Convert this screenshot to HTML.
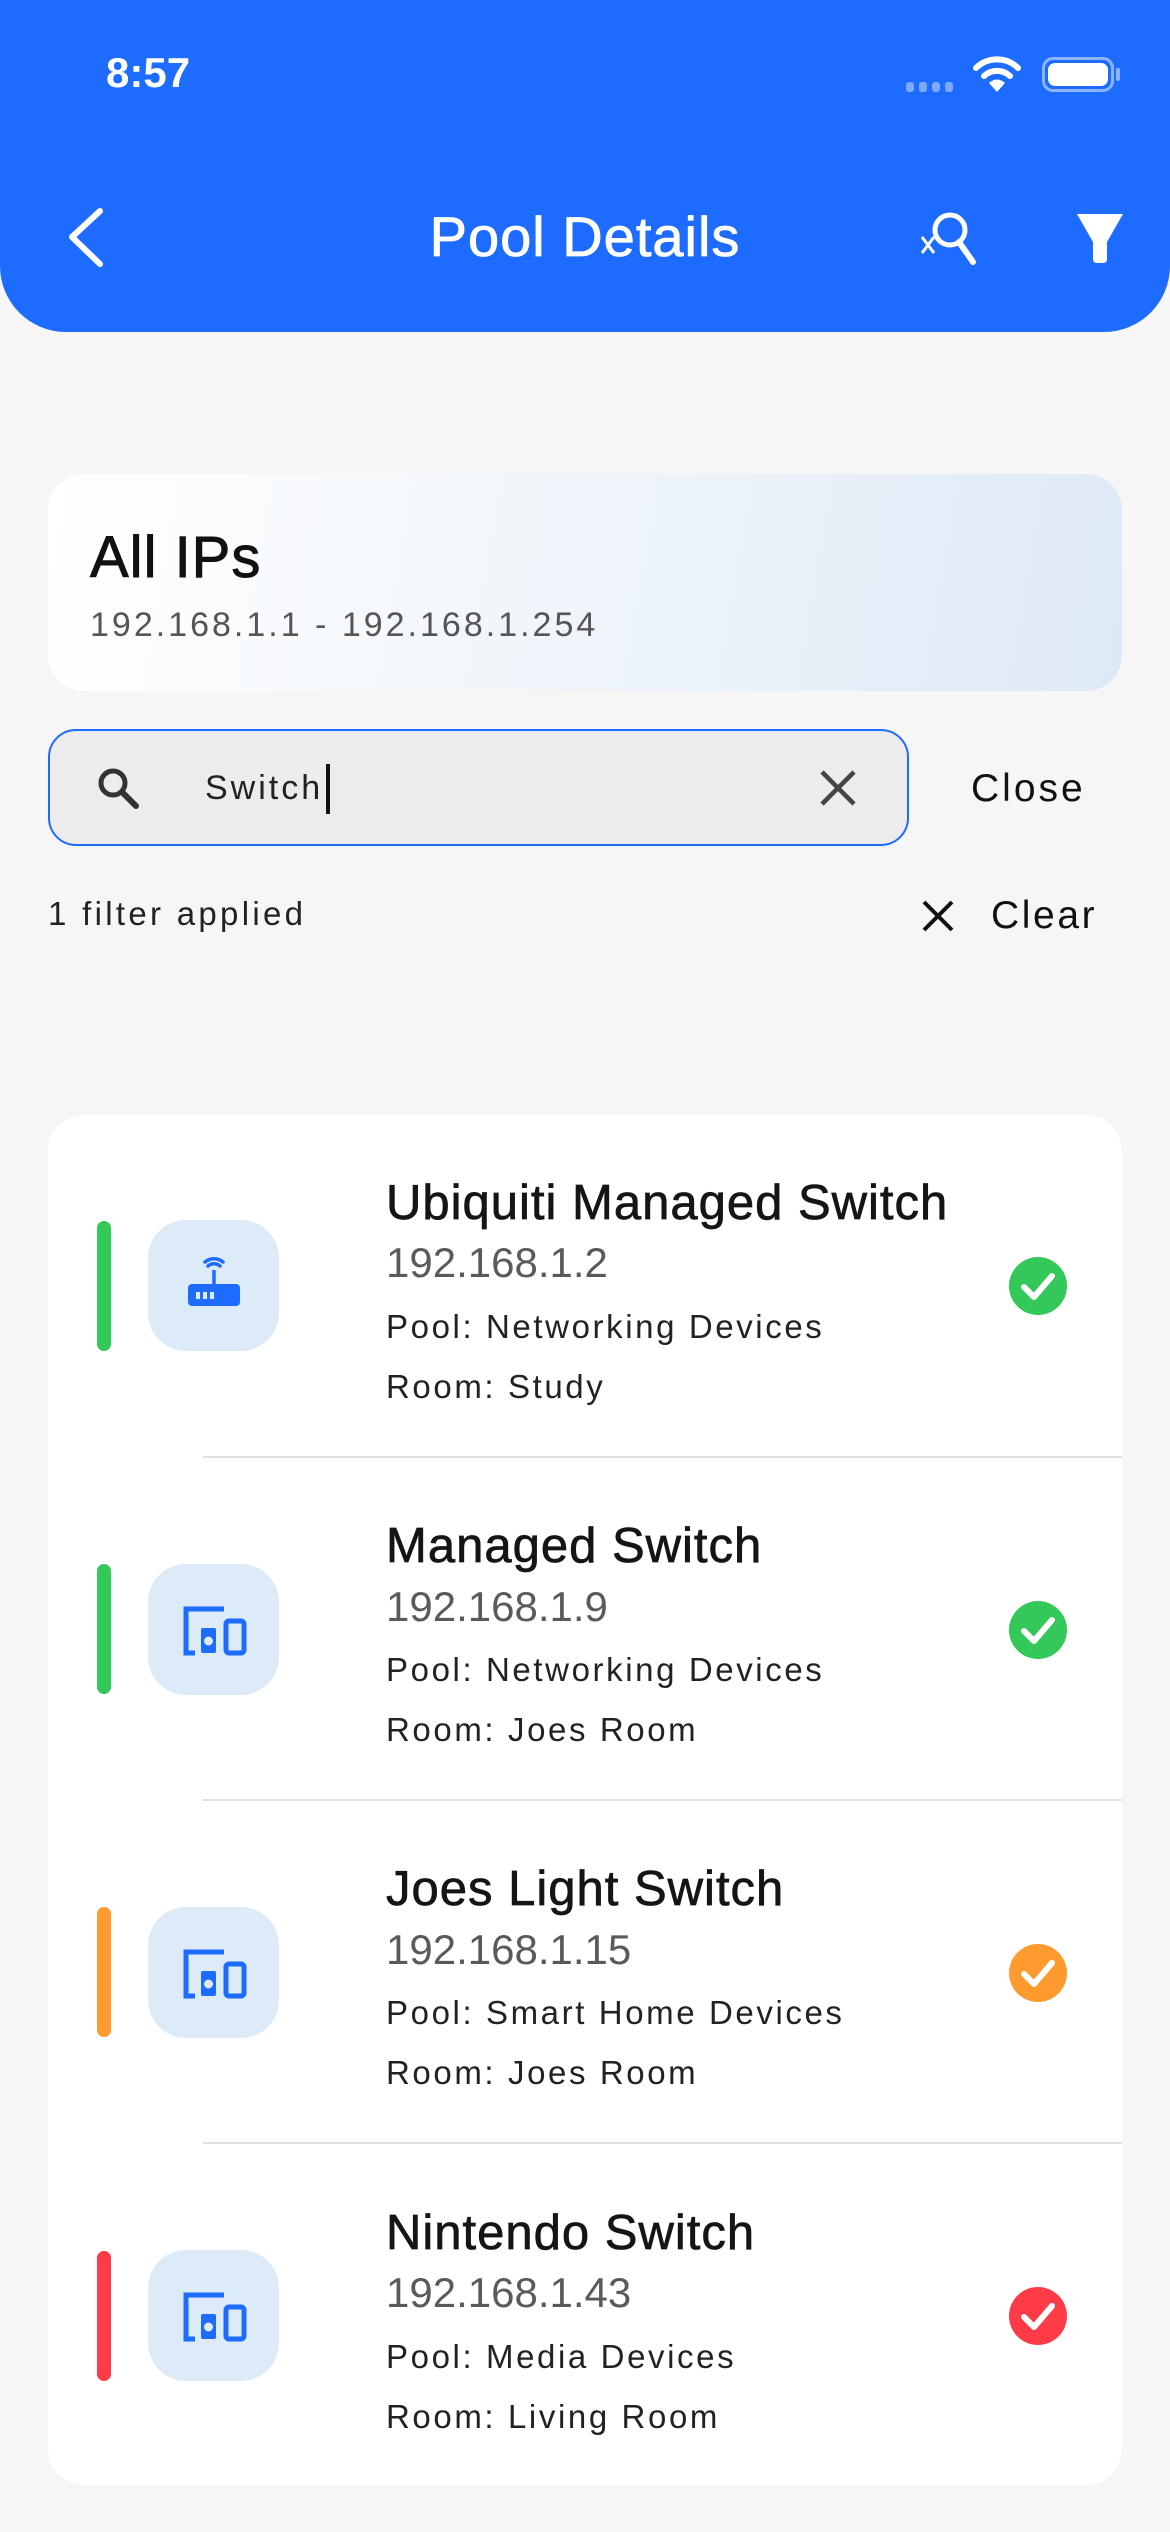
<!DOCTYPE html>
<html><head><meta charset="utf-8"><style>
*{margin:0;padding:0;box-sizing:border-box}
body{width:1170px;height:2532px;background:#f6f6f6;font-family:"Liberation Sans",sans-serif;position:relative;overflow:hidden;color:#111}
.abs{position:absolute}
.hdr{left:0;top:0;width:1170px;height:332px;background:#1e6bff;border-radius:0 0 66px 66px}
.t{white-space:nowrap;line-height:1}
.card{left:48px;top:474px;width:1074px;height:217px;border-radius:36px;background:linear-gradient(100deg,#ffffff 0%,#f4f8fc 35%,#dde9f6 100%)}
.sb{left:48px;top:729px;width:861px;height:117px;border-radius:28px;background:#ececec;border:2.5px solid #1e6bff}
.list{left:48px;top:1115px;width:1074px;height:1370px;border-radius:36px;background:#fff}
.bar{width:14px;height:130px;border-radius:7px}
.ib{width:131px;height:131px;border-radius:38px;background:#dcebf7}
.title{font-size:49px;color:#151515;letter-spacing:1px;-webkit-text-stroke:0.7px #151515}
.ip{font-size:42px;color:#5a5a5a}
.sm{font-size:33px;color:#222;letter-spacing:2.6px}
.div{height:2px;background:#e0e0e0;left:203px;width:919px}
</style></head><body>
<div class="abs hdr"></div>
<div class="abs t" style="left:106px;top:52px;font-size:42px;color:#fff;font-weight:bold">8:57</div>
<div class="abs" style="left:906px;top:82px;width:52px;height:10px">
<span class="abs" style="left:0;top:0;width:8px;height:10px;border-radius:3px;background:#7fa9ff"></span>
<span class="abs" style="left:13px;top:0;width:8px;height:10px;border-radius:3px;background:#7fa9ff"></span>
<span class="abs" style="left:26px;top:0;width:8px;height:10px;border-radius:3px;background:#7fa9ff"></span>
<span class="abs" style="left:39px;top:0;width:8px;height:10px;border-radius:3px;background:#7fa9ff"></span>
</div>
<svg class="abs" style="left:972px;top:54px" width="50" height="40" viewBox="0 0 50 40"><path d="M4 14 A30 30 0 0 1 46 14" stroke="#fff" stroke-width="6" fill="none" stroke-linecap="round"/><path d="M12 22 A19 19 0 0 1 38 22" stroke="#fff" stroke-width="6" fill="none" stroke-linecap="round"/><path d="M25 38 L17 29 A11 11 0 0 1 33 29 Z" fill="#fff"/></svg>
<div class="abs" style="left:1042px;top:57px;width:72px;height:35px;border:3px solid #8fb4ff;border-radius:11px"></div>
<div class="abs" style="left:1048px;top:63px;width:60px;height:23px;background:#fff;border-radius:7px"></div>
<div class="abs" style="left:1116px;top:68px;width:4px;height:13px;background:#8fb4ff;border-radius:2px"></div>
<svg class="abs" style="left:60px;top:205px" width="50" height="65" viewBox="0 0 50 65"><path d="M40 6 L12 32 L40 59" stroke="#fff" stroke-width="6" fill="none" stroke-linecap="round" stroke-linejoin="round"/></svg>
<div class="abs t" style="left:0;width:1170px;text-align:center;top:209px;font-size:56px;color:#fff;letter-spacing:1px;-webkit-text-stroke:0.8px #fff">Pool Details</div>
<svg class="abs" style="left:915px;top:205px" width="70" height="70" viewBox="0 0 70 70"><circle cx="35" cy="25" r="15" stroke="#fff" stroke-width="5" fill="none"/><path d="M44 37 L58 57" stroke="#fff" stroke-width="6" stroke-linecap="round"/><path d="M7 32 L19 48 M19 32 L7 48" stroke="#fff" stroke-width="3"/></svg>
<svg class="abs" style="left:1075px;top:212px" width="50" height="52" viewBox="0 0 50 52"><path d="M2 2 H48 L32 30 V47 Q32 51 28 51 H22 Q18 51 18 47 V30 Z" fill="#fff"/></svg>

<div class="abs card"></div>
<div class="abs t" style="left:90px;top:529px;font-size:58px;color:#111;letter-spacing:1px;-webkit-text-stroke:0.9px #111">All IPs</div>
<div class="abs t" style="left:90px;top:608px;font-size:34px;color:#555;letter-spacing:3px">192.168.1.1 - 192.168.1.254</div>

<div class="abs sb"></div>
<svg class="abs" style="left:94px;top:764px" width="48" height="48" viewBox="0 0 48 48"><circle cx="19" cy="19" r="12" stroke="#333" stroke-width="5" fill="none"/><path d="M28 28 L42 42" stroke="#333" stroke-width="6" stroke-linecap="round"/></svg>
<div class="abs t" style="left:205px;top:771px;font-size:34px;color:#222;letter-spacing:3px">Switch</div>
<div class="abs" style="left:326px;top:764px;width:4px;height:50px;background:#111"></div>
<svg class="abs" style="left:818px;top:768px" width="40" height="40" viewBox="0 0 40 40"><path d="M4 4 L36 36 M36 4 L4 36" stroke="#444" stroke-width="4.5"/></svg>
<div class="abs t" style="left:971px;top:769px;font-size:39px;color:#111;letter-spacing:3px">Close</div>

<div class="abs t" style="left:48px;top:897px;font-size:33px;color:#222;letter-spacing:3.3px">1 filter applied</div>
<svg class="abs" style="left:921px;top:899px" width="34" height="34" viewBox="0 0 34 34"><path d="M3 3 L31 31 M31 3 L3 31" stroke="#111" stroke-width="4"/></svg>
<div class="abs t" style="left:991px;top:896px;font-size:39px;color:#111;letter-spacing:2.6px">Clear</div>

<div class="abs list"></div>

<div class="abs" style="left:0;top:0">
<div class="abs bar" style="left:97px;top:1221px;background:#34c759"></div>
<div class="abs ib" style="left:148px;top:1220px"></div>
<svg class="abs" style="left:181px;top:1253px" width="66" height="66" viewBox="0 0 66 66"><path d="M27 13 A9 9 0 0 1 39 13 M24 9 A14 14 0 0 1 42 9" stroke="#1e6bff" stroke-width="3.5" fill="none" stroke-linecap="round"/><path d="M33 17 V32" stroke="#1e6bff" stroke-width="3.5"/><rect x="7" y="31" width="52" height="22" rx="4" fill="#1e6bff"/><rect x="15" y="39" width="4" height="7" fill="#dcebf7"/><rect x="22" y="39" width="4" height="7" fill="#dcebf7"/><rect x="29" y="39" width="4" height="7" fill="#dcebf7"/></svg>
<div class="abs t title" style="left:386px;top:1179px">Ubiquiti Managed Switch</div>
<div class="abs t ip" style="left:386px;top:1242px">192.168.1.2</div>
<div class="abs t sm" style="left:386px;top:1310px">Pool: Networking Devices</div>
<div class="abs t sm" style="left:386px;top:1370px">Room: Study</div>
<svg class="abs" style="left:1009px;top:1257px" width="58" height="58" viewBox="0 0 58 58"><circle cx="29" cy="29" r="29" fill="#34c759"/><path d="M15 30 L25 40 L43 19" stroke="#fff" stroke-width="6" fill="none" stroke-linecap="round" stroke-linejoin="round"/></svg>
<div class="abs div" style="top:1456px"></div>

<div class="abs bar" style="left:97px;top:1564px;background:#34c759"></div>
<div class="abs ib" style="left:148px;top:1564px"></div>
<svg class="abs" style="left:181px;top:1597px" width="66" height="66" viewBox="0 0 66 66"><path d="M43 12 H5 V56 H14" stroke="#1e6bff" stroke-width="5" fill="none"/><rect x="45" y="24" width="18" height="32" rx="3" stroke="#1e6bff" stroke-width="5" fill="none"/><rect x="20" y="31" width="15" height="25" rx="2" fill="#1e6bff"/><circle cx="27.5" cy="44" r="4.5" fill="#dcebf7"/></svg>
<div class="abs t title" style="left:386px;top:1522px">Managed Switch</div>
<div class="abs t ip" style="left:386px;top:1586px">192.168.1.9</div>
<div class="abs t sm" style="left:386px;top:1653px">Pool: Networking Devices</div>
<div class="abs t sm" style="left:386px;top:1713px">Room: Joes Room</div>
<svg class="abs" style="left:1009px;top:1601px" width="58" height="58" viewBox="0 0 58 58"><circle cx="29" cy="29" r="29" fill="#34c759"/><path d="M15 30 L25 40 L43 19" stroke="#fff" stroke-width="6" fill="none" stroke-linecap="round" stroke-linejoin="round"/></svg>
<div class="abs div" style="top:1799px"></div>

<div class="abs bar" style="left:97px;top:1907px;background:#ff9a2e"></div>
<div class="abs ib" style="left:148px;top:1907px"></div>
<svg class="abs" style="left:181px;top:1940px" width="66" height="66" viewBox="0 0 66 66"><path d="M43 12 H5 V56 H14" stroke="#1e6bff" stroke-width="5" fill="none"/><rect x="45" y="24" width="18" height="32" rx="3" stroke="#1e6bff" stroke-width="5" fill="none"/><rect x="20" y="31" width="15" height="25" rx="2" fill="#1e6bff"/><circle cx="27.5" cy="44" r="4.5" fill="#dcebf7"/></svg>
<div class="abs t title" style="left:386px;top:1865px">Joes Light Switch</div>
<div class="abs t ip" style="left:386px;top:1929px">192.168.1.15</div>
<div class="abs t sm" style="left:386px;top:1996px">Pool: Smart Home Devices</div>
<div class="abs t sm" style="left:386px;top:2056px">Room: Joes Room</div>
<svg class="abs" style="left:1009px;top:1944px" width="58" height="58" viewBox="0 0 58 58"><circle cx="29" cy="29" r="29" fill="#ff9a2e"/><path d="M15 30 L25 40 L43 19" stroke="#fff" stroke-width="6" fill="none" stroke-linecap="round" stroke-linejoin="round"/></svg>
<div class="abs div" style="top:2142px"></div>

<div class="abs bar" style="left:97px;top:2251px;background:#ff3b47"></div>
<div class="abs ib" style="left:148px;top:2250px"></div>
<svg class="abs" style="left:181px;top:2283px" width="66" height="66" viewBox="0 0 66 66"><path d="M43 12 H5 V56 H14" stroke="#1e6bff" stroke-width="5" fill="none"/><rect x="45" y="24" width="18" height="32" rx="3" stroke="#1e6bff" stroke-width="5" fill="none"/><rect x="20" y="31" width="15" height="25" rx="2" fill="#1e6bff"/><circle cx="27.5" cy="44" r="4.5" fill="#dcebf7"/></svg>
<div class="abs t title" style="left:386px;top:2209px">Nintendo Switch</div>
<div class="abs t ip" style="left:386px;top:2272px">192.168.1.43</div>
<div class="abs t sm" style="left:386px;top:2340px">Pool: Media Devices</div>
<div class="abs t sm" style="left:386px;top:2400px">Room: Living Room</div>
<svg class="abs" style="left:1009px;top:2287px" width="58" height="58" viewBox="0 0 58 58"><circle cx="29" cy="29" r="29" fill="#ff3b47"/><path d="M15 30 L25 40 L43 19" stroke="#fff" stroke-width="6" fill="none" stroke-linecap="round" stroke-linejoin="round"/></svg>
</div>
</body></html>
